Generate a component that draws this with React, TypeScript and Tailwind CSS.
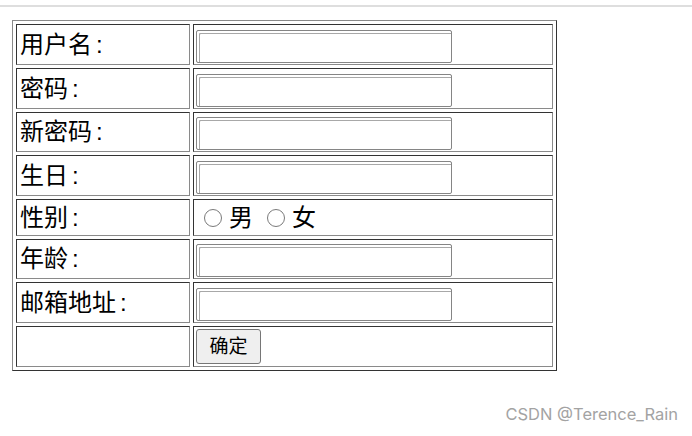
const rows = [
  { label: '用户名', h: 'h-[41px]' },
  { label: '密码', h: 'h-[41px]' },
  { label: '新密码', h: 'h-[40px]' },
  { label: '生日', h: 'h-[41px]' },
  { label: '性别', h: 'h-[37px]', radio: true },
  { label: '年龄', h: 'h-[40px]' },
  { label: '邮箱地址', h: 'h-[41px]' },
];

const cell =
  'border border-solid border-t-[#333] border-l-[#333] border-b-[#8a8a8a] border-r-[#8a8a8a] p-0 align-middle';

function TextBox() {
  return (
    <input
      type="text"
      className="block w-[256px] h-[33px] bg-white border border-[#858585] rounded-[2px] shadow-[inset_2px_2px_0_#fff,inset_3px_3px_0_#a8a8a8] outline-none"
    />
  );
}

function Radio({ label }: { label: string }) {
  return (
    <label className="flex items-center gap-[7px]">
      <span className="w-[18px] h-[18px] rounded-full border-[1.5px] border-[#7a7a7a] bg-white" />
      <span>{label}</span>
    </label>
  );
}

export default function App() {
  return (
    <div className="relative w-[692px] h-[436px] bg-white overflow-hidden font-['Liberation_Sans','Noto_Sans_CJK_SC',sans-serif] text-black">
      <div className="mt-[5px] h-[2px] bg-[#dedede]" />

      <table className="ml-[12px] mt-[13px] border-separate border-spacing-[3px] border border-solid border-t-[#8a8a8a] border-l-[#8a8a8a] border-b-[#333] border-r-[#333]">
        <tbody>
          {rows.map((r) => (
            <tr key={r.label}>
              <td className={`${cell} ${r.h} w-[174px] pl-[3px] text-[24px] leading-none`}>
                {r.label}
                <span className="ml-[4px]">:</span>
              </td>
              <td className={`${cell} ${r.h} w-[360px] pl-[2px] text-[24px] leading-none`}>
                {r.radio ? (
                  <div className="flex items-center gap-[14px] pl-[8px]">
                    <Radio label="男" />
                    <Radio label="女" />
                  </div>
                ) : (
                  <div className="pt-[3px]">
                    <TextBox />
                  </div>
                )}
              </td>
            </tr>
          ))}
          <tr>
            <td className={`${cell} h-[41px] w-[174px]`} />
            <td className={`${cell} h-[41px] w-[360px] pl-[2px]`}>
              <button className="block w-[65px] h-[35px] bg-[#efefef] border border-[#767676] rounded-[3px] text-[19px] leading-none">
                确定
              </button>
            </td>
          </tr>
        </tbody>
      </table>

      <div className="absolute right-[14px] bottom-[9px] text-[16.5px] text-[#a3a3a3] font-['Inter','Liberation_Sans',sans-serif]">
        CSDN @Terence_Rain
      </div>
    </div>
  );
}
